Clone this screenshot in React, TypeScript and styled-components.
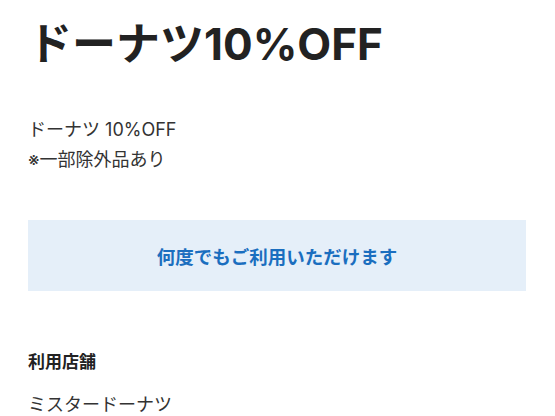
import styled, { createGlobalStyle } from "styled-components";

const GlobalStyle = createGlobalStyle`
  body {
    margin: 0;
    background: #ffffff;
    font-family: Inter, "Noto Sans CJK JP", sans-serif;
    color: #222222;
  }
`;

const Page = styled.main`
  padding: 12px 29px 0 28px;
`;

const Title = styled.h1`
  margin: 0;
  font-size: 44px;
  font-weight: 700;
  line-height: 64px;
  color: #222222;
`;

const Description = styled.p`
  margin: 39px 0 0;
  font-size: 18px;
  line-height: 30px;
  color: #333333;
`;

const Notice = styled.div`
  margin-top: 45px;
  height: 71px;
  display: flex;
  align-items: center;
  justify-content: center;
  background: #e5eff9;
  color: #1a6ebf;
  font-size: 18.5px;
  font-weight: 700;
`;

const SectionTitle = styled.h2`
  margin: 58px 0 0;
  font-size: 17px;
  font-weight: 700;
  line-height: 26px;
  color: #222222;
`;

const SectionText = styled.p`
  margin: 16px 0 0;
  font-size: 18px;
  line-height: 28px;
  color: #333333;
`;

export default function App() {
  return (
    <>
      <GlobalStyle />
      <Page>
        <Title>ドーナツ10%OFF</Title>
        <Description>
          ドーナツ 10%OFF
          <br />
          ※一部除外品あり
        </Description>
        <Notice>何度でもご利用いただけます</Notice>
        <SectionTitle>利用店舗</SectionTitle>
        <SectionText>ミスタードーナツ</SectionText>
      </Page>
    </>
  );
}
